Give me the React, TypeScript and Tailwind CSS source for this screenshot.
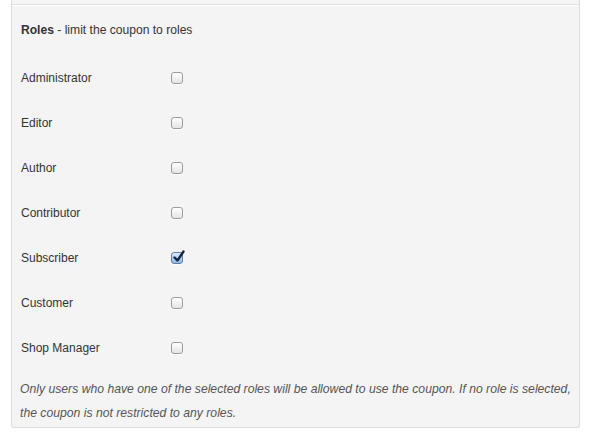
import { useState } from "react";

const ROLES = [
  "Administrator",
  "Editor",
  "Author",
  "Contributor",
  "Subscriber",
  "Customer",
  "Shop Manager",
];

function MacCheckbox({ checked, onChange }: { checked: boolean; onChange: () => void }) {
  return (
    <button
      type="button"
      onClick={onChange}
      aria-pressed={checked}
      className={
        checked
          ? "relative h-[12px] w-[12px] rounded-[3px] border border-[#5a7fb0] bg-gradient-to-b from-[#dcebfc] to-[#8fb6e6] shadow-[0_1px_0_rgba(255,255,255,0.8)]"
          : "relative h-[12px] w-[12px] rounded-[3px] border border-[#9c9c9c] bg-gradient-to-b from-[#ffffff] to-[#e4e4e4] shadow-[0_1px_0_rgba(255,255,255,0.8)]"
      }
    >
      {checked && (
        <svg
          viewBox="0 0 14 14"
          className="absolute -top-[3px] left-[0px] h-[14px] w-[14px]"
          fill="none"
        >
          <path
            d="M2.5 7.5 L5.5 10.5 L11.5 1.5"
            stroke="#142640"
            strokeWidth="2.4"
            strokeLinecap="round"
            strokeLinejoin="round"
          />
        </svg>
      )}
    </button>
  );
}

export default function App() {
  const [selected, setSelected] = useState<Record<string, boolean>>({
    Subscriber: true,
  });

  return (
    <div className="h-[435px] w-[590px] bg-white font-['Liberation_Sans',Arial,sans-serif] text-[12px] text-[#333]">
      <div className="ml-[11px] w-[569px] rounded-b-[3px] border-x border-b border-[#dcdcdc] bg-[#f4f4f4]">
        <div className="h-[4px]" />
        <div className="border-t border-[#dfdfdf]" />
        <div className="border-t border-white" />

        <div className="pl-[9px]">
          <div className="flex h-[49px] items-center">
            <span className="text-[12.1px]">
              <strong className="font-bold">Roles</strong> - limit the coupon to roles
            </span>
          </div>

          {ROLES.map((role) => (
            <div key={role} className="flex h-[45px] items-center">
              <span className="w-[150px]">{role}</span>
              <MacCheckbox
                checked={!!selected[role]}
                onChange={() =>
                  setSelected((prev) => ({ ...prev, [role]: !prev[role] }))
                }
              />
            </div>
          ))}

          <p className="-ml-[1px] whitespace-nowrap pb-[2px] pt-[7px] text-[12.2px] italic leading-[24px] text-[#555]">
            Only users who have one of the selected roles will be allowed to use the coupon. If no role is selected,
            <br />
            the coupon is not restricted to any roles.
          </p>
        </div>
      </div>
    </div>
  );
}
